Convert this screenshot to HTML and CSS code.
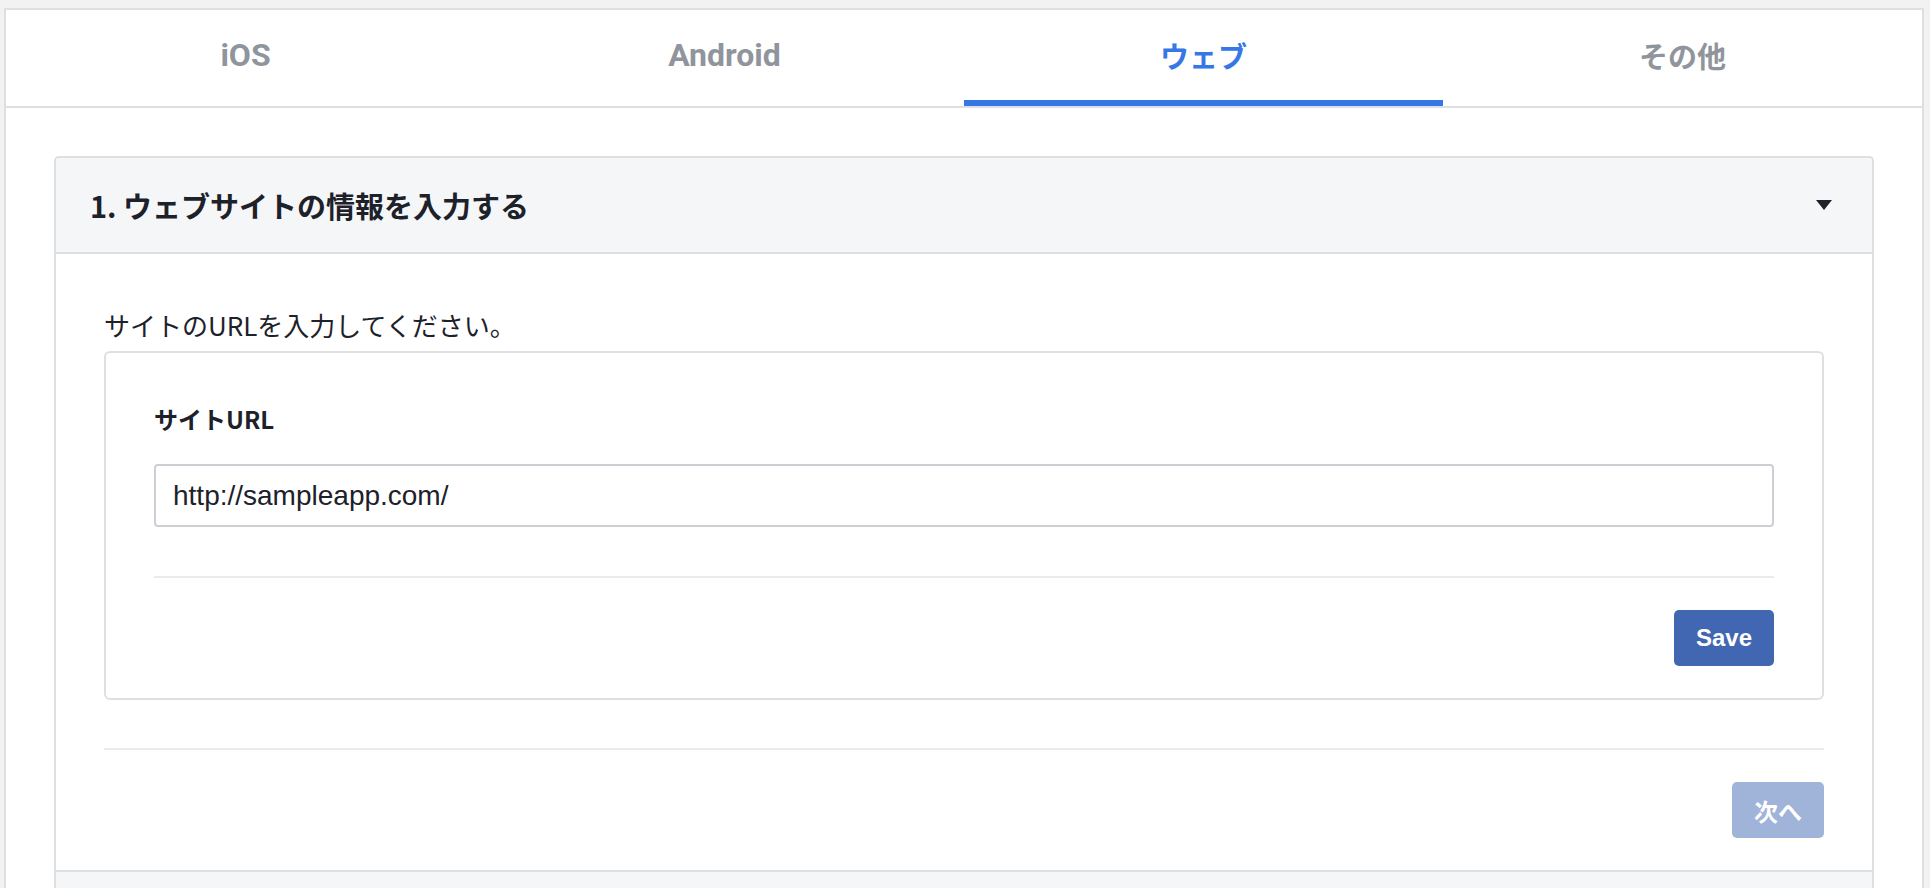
FILE: index.html
```html
<!DOCTYPE html>
<html lang="ja">
<head>
<meta charset="utf-8">
<title>ウェブ</title>
<link rel="stylesheet" href="styles.css">
</head>
<body>
<div class="frame">
  <nav class="tabs">
    <div class="tab">iOS</div>
    <div class="tab">Android</div>
    <div class="tab tab-ja active">ウェブ</div>
    <div class="tab tab-ja">その他</div>
  </nav>
  <main class="content">
    <div class="accordion">
      <section class="step">
        <header class="step-header">
          <h2 class="step-title">1. ウェブサイトの情報を入力する</h2>
          <span class="caret"></span>
        </header>
        <div class="step-body">
          <p class="intro">サイトのURLを入力してください。</p>
          <div class="card">
            <label class="field-label" for="site-url">サイトURL</label>
            <input id="site-url" class="field-input" type="text" value="http://sampleapp.com/">
            <div class="divider"></div>
            <div class="actions">
              <button class="btn btn-primary" type="button">Save</button>
            </div>
          </div>
          <div class="divider divider-outer"></div>
          <div class="actions">
            <button class="btn btn-primary btn-next" type="button" disabled>次へ</button>
          </div>
        </div>
      </section>
      <section class="step">
        <header class="step-header"></header>
      </section>
    </div>
  </main>
</div>
</body>
</html>
```

FILE: styles.css
```css
html, body {
  margin: 0;
  padding: 0;
}

body {
  background: #f2f2f2;
  padding: 8px 6px 0 4px;
  font-family: Roboto, "Noto Sans CJK JP", sans-serif;
  color: #1d2129;
}

.frame {
  background: #ffffff;
  border: 2px solid #dddfe2;
  border-bottom: none;
}

.tabs {
  display: grid;
  grid-template-columns: repeat(4, 1fr);
  border-bottom: 2px solid #dddfe2;
}

.tab {
  height: 90px;
  border-bottom: 6px solid transparent;
  display: flex;
  align-items: center;
  justify-content: center;
  font-family: Roboto, "Noto Sans CJK JP", sans-serif;
  font-weight: 700;
  font-size: 32px;
  color: #90949c;
}

.tab-ja {
  font-family: "Noto Sans CJK JP", sans-serif;
  font-size: 29px;
}

.tab.active {
  color: #3578e5;
  border-bottom-color: #3578e5;
}

.content {
  padding: 48px 48px 0 48px;
}

.accordion {
  border: 2px solid #dddfe2;
  border-bottom: none;
  border-radius: 5px 5px 0 0;
  overflow: hidden;
}

.step + .step {
  border-top: 2px solid #dddfe2;
}

.step-header {
  height: 94px;
  background: #f5f6f7;
  border-bottom: 2px solid #dddfe2;
  display: flex;
  align-items: center;
  justify-content: space-between;
  padding: 0 40px 0 34px;
}

.step-title {
  margin: 0;
  font-family: "Noto Sans CJK JP", sans-serif;
  font-weight: 700;
  font-size: 29px;
  color: #1d2129;
}

.caret {
  width: 0;
  height: 0;
  border-left: 8px solid transparent;
  border-right: 8px solid transparent;
  border-top: 10px solid #1d2129;
}

.step-body {
  padding: 48px 48px 32px 48px;
}

.intro {
  margin: 0 0 3px 0;
  font-family: "Noto Sans CJK JP", sans-serif;
  font-size: 26px;
  line-height: 46px;
  color: #1d2129;
}

.card {
  border: 2px solid #dddfe2;
  border-radius: 6px;
  padding: 48px 48px 32px 48px;
}

.field-label {
  display: block;
  font-family: "Noto Sans CJK JP", sans-serif;
  font-weight: 700;
  font-size: 24px;
  line-height: 36px;
  color: #1d2129;
  margin-bottom: 27px;
}

.field-input {
  display: block;
  box-sizing: border-box;
  width: 100%;
  height: 63px;
  margin: 0;
  padding: 0 17px;
  border: 2px solid #ccd0d5;
  border-radius: 4px;
  background: #ffffff;
  font-family: "Liberation Sans", Arial, sans-serif;
  font-size: 28px;
  color: #1d2129;
  outline: none;
}

.divider {
  height: 2px;
  background: #e9ebee;
  margin: 49px 0 32px 0;
}

.divider-outer {
  margin: 48px 0 32px 0;
}

.actions {
  display: flex;
  justify-content: flex-end;
}

.btn {
  height: 56px;
  padding: 0 22px;
  border: none;
  border-radius: 5px;
  font-weight: 700;
  font-size: 24px;
  color: #ffffff;
  display: flex;
  align-items: center;
  justify-content: center;
}

.btn-primary {
  background: #4267b2;
  font-family: "Liberation Sans", Arial, sans-serif;
}

.btn-next {
  background: #a0b3d8;
  font-family: "Noto Sans CJK JP", sans-serif;
}
```
